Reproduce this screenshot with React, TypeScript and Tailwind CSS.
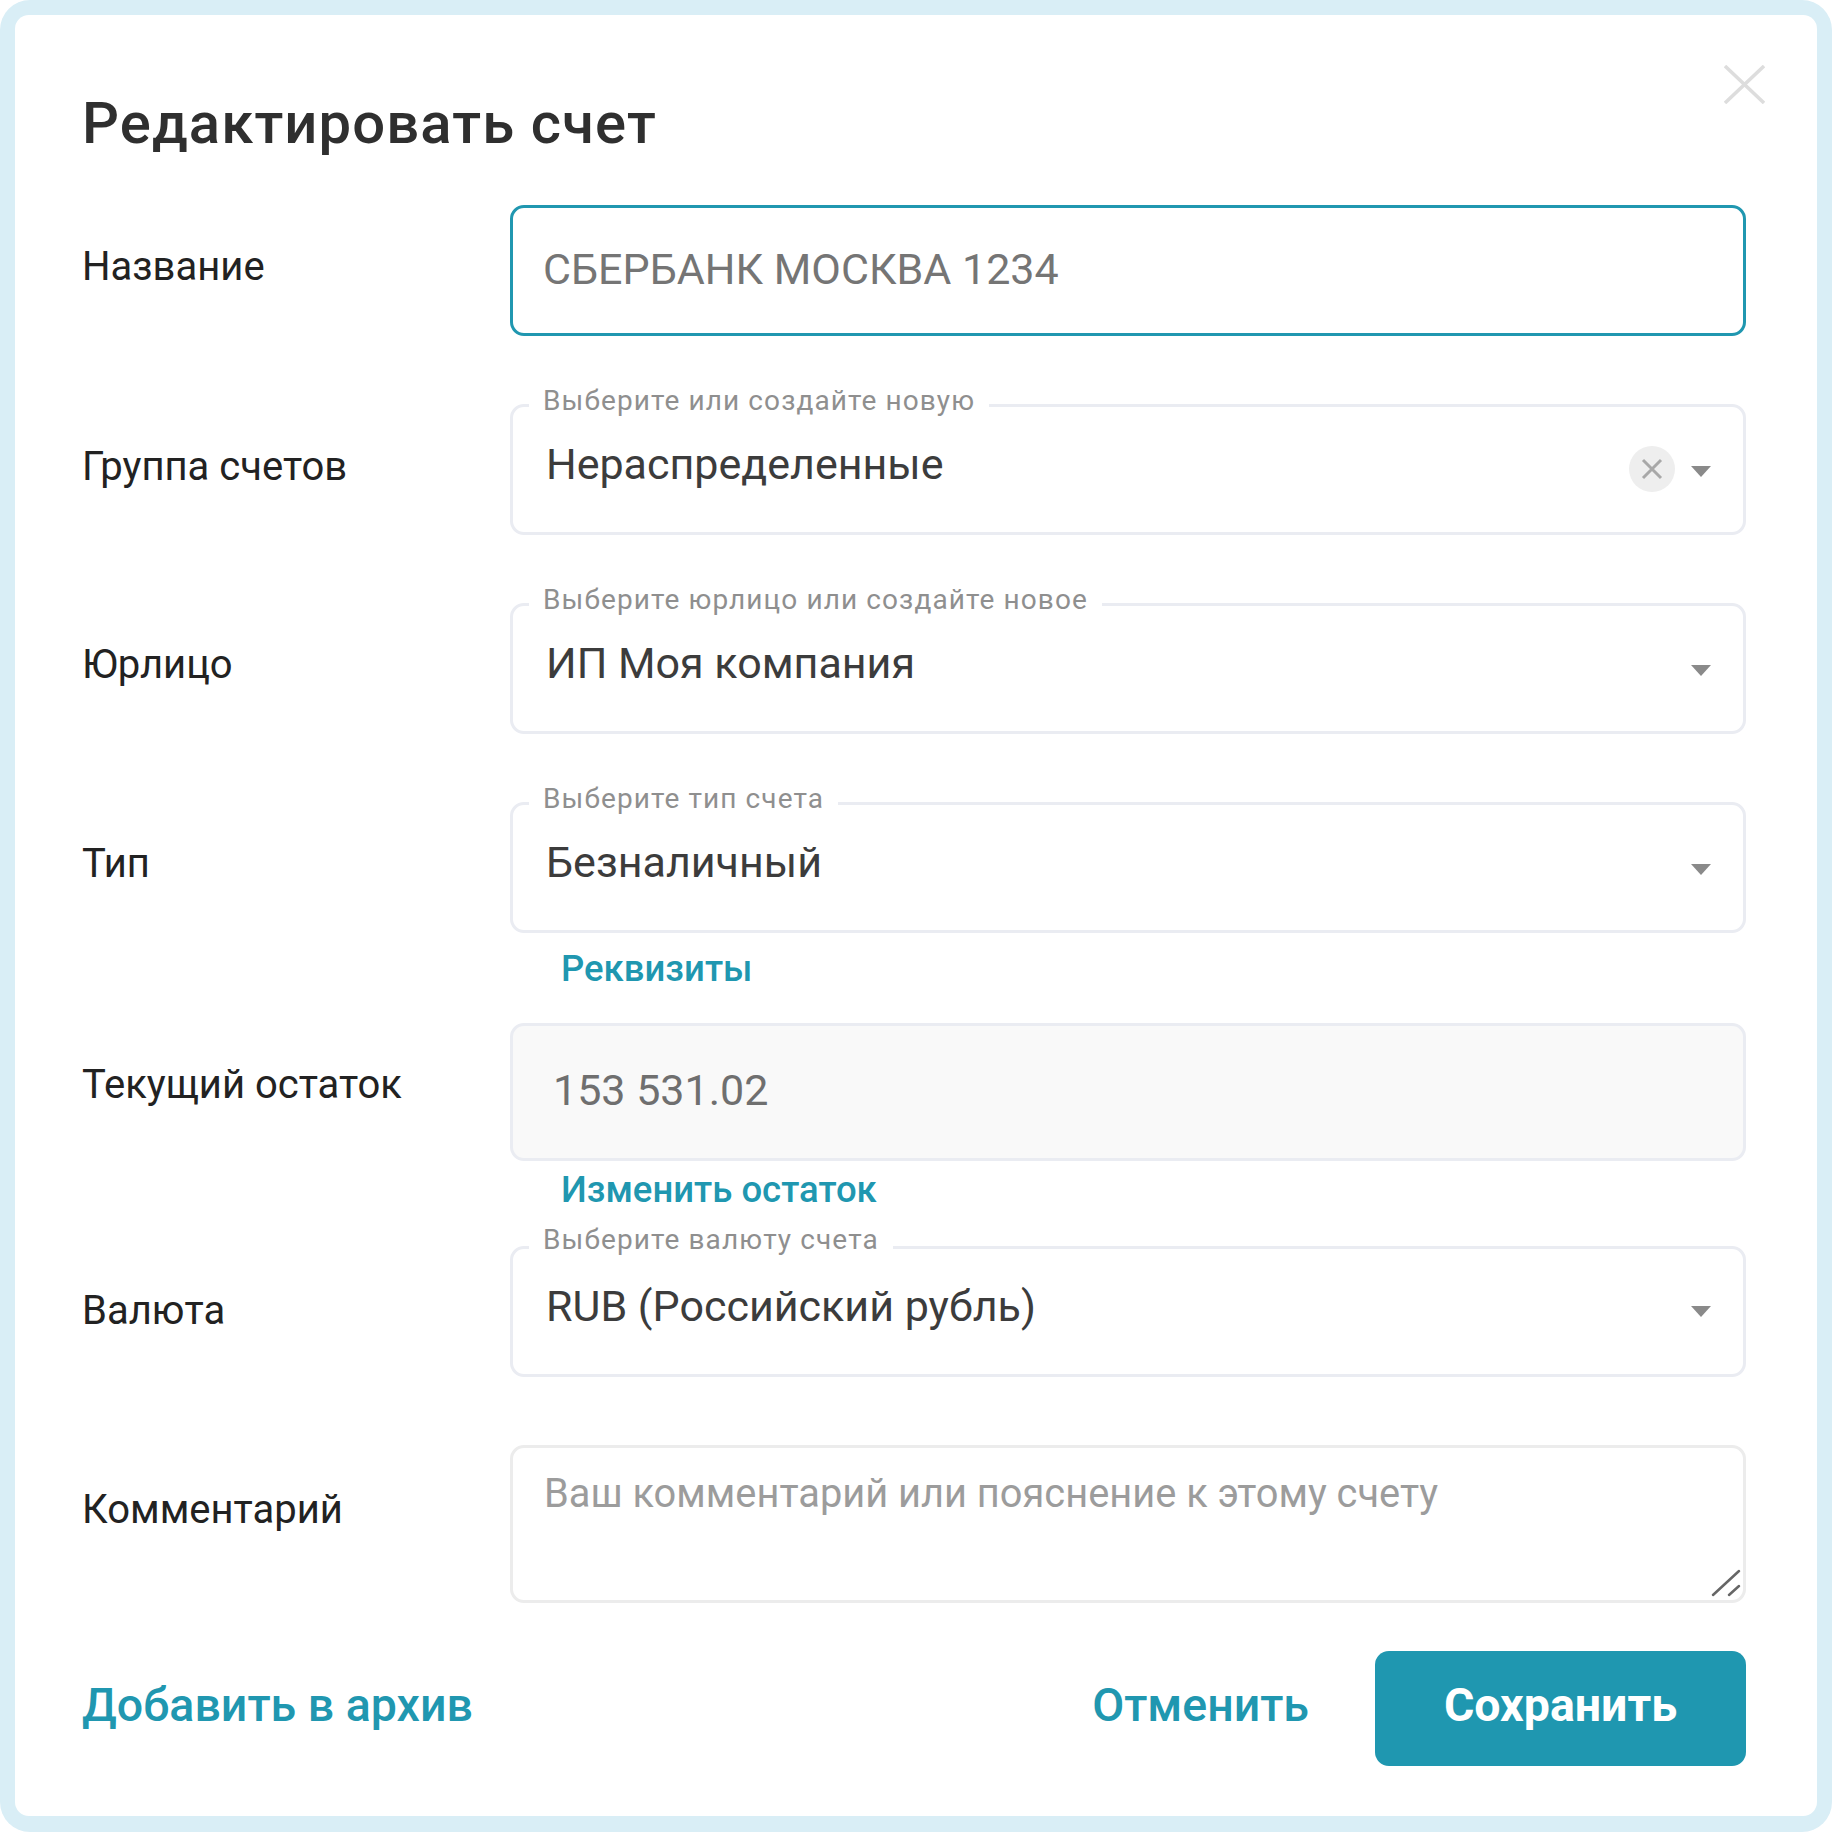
import type { ReactNode } from "react";

const Row = ({
  label,
  labelClass = "pt-[42px]",
  children,
}: {
  label: string;
  labelClass?: string;
  children: ReactNode;
}) => (
  <div className="flex">
    <div className={`w-[428px] shrink-0 text-[40px] leading-[40px] text-[#222222] ${labelClass}`}>{label}</div>
    <div className="flex-1">{children}</div>
  </div>
);

const SelectField = ({
  legend,
  value,
  clearable,
  legendClass = "-top-[21px]",
  chevronClass = "mt-[59px]",
}: {
  legend: string;
  value: string;
  clearable?: boolean;
  legendClass?: string;
  chevronClass?: string;
}) => (
  <div className="relative flex h-[131px] items-start rounded-[14px] border-[3px] border-[#eaecf2] pl-[33px] pr-[32px]">
    <span
      className={`absolute left-[16px] bg-white px-[14px] text-[28px] leading-[30px] tracking-[1.1px] text-[#8f8f8f] ${legendClass}`}
    >
      {legend}
    </span>
    <span className="mt-[32px] flex-1 text-[43px] leading-[50px] text-[#3c3c3c]">{value}</span>
    {clearable && (
      <span className="mt-[39px] mr-[16px] flex h-[46px] w-[46px] items-center justify-center rounded-full bg-[#eeeeee]">
        <svg width="22" height="22" viewBox="0 0 22 22" fill="none" stroke="#a8a8a8" strokeWidth="3">
          <path d="M2 2l18 18M20 2L2 20" />
        </svg>
      </span>
    )}
    <svg width="20" height="11" viewBox="0 0 20 11" className={chevronClass} fill="#8a8a8a">
      <path d="M0 0h20L10 11z" />
    </svg>
  </div>
);

const SubLink = ({ children }: { children: ReactNode }) => (
  <div className="pl-[51px] text-[36.5px] leading-[40px] font-medium text-[#2097b0]">{children}</div>
);

export default function App() {
  return (
    <div className="h-[1832px] w-[1832px] rounded-[30px] bg-[#d9eef6] p-[15px] font-['Roboto',sans-serif]">
      <div className="relative h-[1801px] rounded-[14px] bg-white pl-[67px] pr-[71px] pt-[76px]">
        <svg
          width="41"
          height="39"
          viewBox="0 0 41 39"
          fill="none"
          stroke="#dddddd"
          strokeWidth="3.5"
          className="absolute right-[52px] top-[50px]"
        >
          <path d="M1 1l39 37M40 1L1 38" />
        </svg>

        <h1 className="text-[58px] leading-[64px] font-medium tracking-[1.1px] text-[#2f2f2f]">Редактировать счет</h1>

        <div className="mt-[50px]">
          <Row label="Название">
            <input
              readOnly
              value="СБЕРБАНК МОСКВА 1234"
              className="block h-[131px] w-full rounded-[14px] border-[3px] border-[#2097b0] pb-[4px] pl-[30px] text-[43px] text-[#757575] outline-none"
            />
          </Row>
        </div>
        <div className="mt-[68px]">
          <Row label="Группа счетов" labelClass="pt-[43px]">
            <SelectField legend="Выберите или создайте новую" value="Нераспределенные" clearable />
          </Row>
        </div>
        <div className="mt-[68px]">
          <Row label="Юрлицо">
            <SelectField legend="Выберите юрлицо или создайте новое" value="ИП Моя компания" />
          </Row>
        </div>
        <div className="mt-[68px]">
          <Row label="Тип">
            <SelectField legend="Выберите тип счета" value="Безналичный" />
            <div className="mt-[16px]">
              <SubLink>Реквизиты</SubLink>
            </div>
          </Row>
        </div>
        <div className="mt-[34px]">
          <Row label="Текущий остаток">
            <input
              readOnly
              value="153 531.02"
              className="block h-[138px] w-full rounded-[14px] border-[3px] border-[#eaecf2] bg-[#f9f9f9] pb-[5px] pl-[40px] text-[43px] text-[#6f6f6f] outline-none"
            />
            <div className="mt-[9px]">
              <SubLink>Изменить остаток</SubLink>
            </div>
          </Row>
        </div>
        <div className="mt-[36px]">
          <Row label="Валюта" labelClass="pt-[45px]">
            <SelectField
              legend="Выберите валюту счета"
              value="RUB (Российский рубль)"
              legendClass="-top-[24px]"
              chevronClass="mt-[57px]"
            />
          </Row>
        </div>
        <div className="mt-[68px]">
          <Row label="Комментарий" labelClass="pt-[45px]">
            <div className="relative">
              <textarea
                readOnly
                placeholder="Ваш комментарий или пояснение к этому счету"
                className="block h-[158px] w-full resize-none rounded-[14px] border-[3px] border-[#ececec] pl-[31px] pt-[21px] text-[39.8px] leading-[50px] outline-none placeholder:text-[#9c9c9c]"
              />
              <svg
                width="30"
                height="28"
                viewBox="0 0 30 28"
                fill="none"
                stroke="#666666"
                strokeWidth="2.5"
                strokeLinecap="round"
                className="absolute bottom-[6px] right-[5px]"
              >
                <path d="M2 26L28 2M18 26l10-9" />
              </svg>
            </div>
          </Row>
        </div>

        <div className="mt-[48px] flex items-center">
          <button type="button" className="pb-[5px] text-[46.5px] font-medium text-[#2097b0]">
            Добавить в архив
          </button>
          <button type="button" className="ml-auto pb-[5px] text-[46.5px] font-medium text-[#2097b0]">
            Отменить
          </button>
          <button
            type="button"
            className="ml-[66px] h-[115px] w-[371px] rounded-[14px] bg-[#1f97b0] pb-[5px] text-[46.5px] font-bold text-white"
          >
            Сохранить
          </button>
        </div>
      </div>
    </div>
  );
}
